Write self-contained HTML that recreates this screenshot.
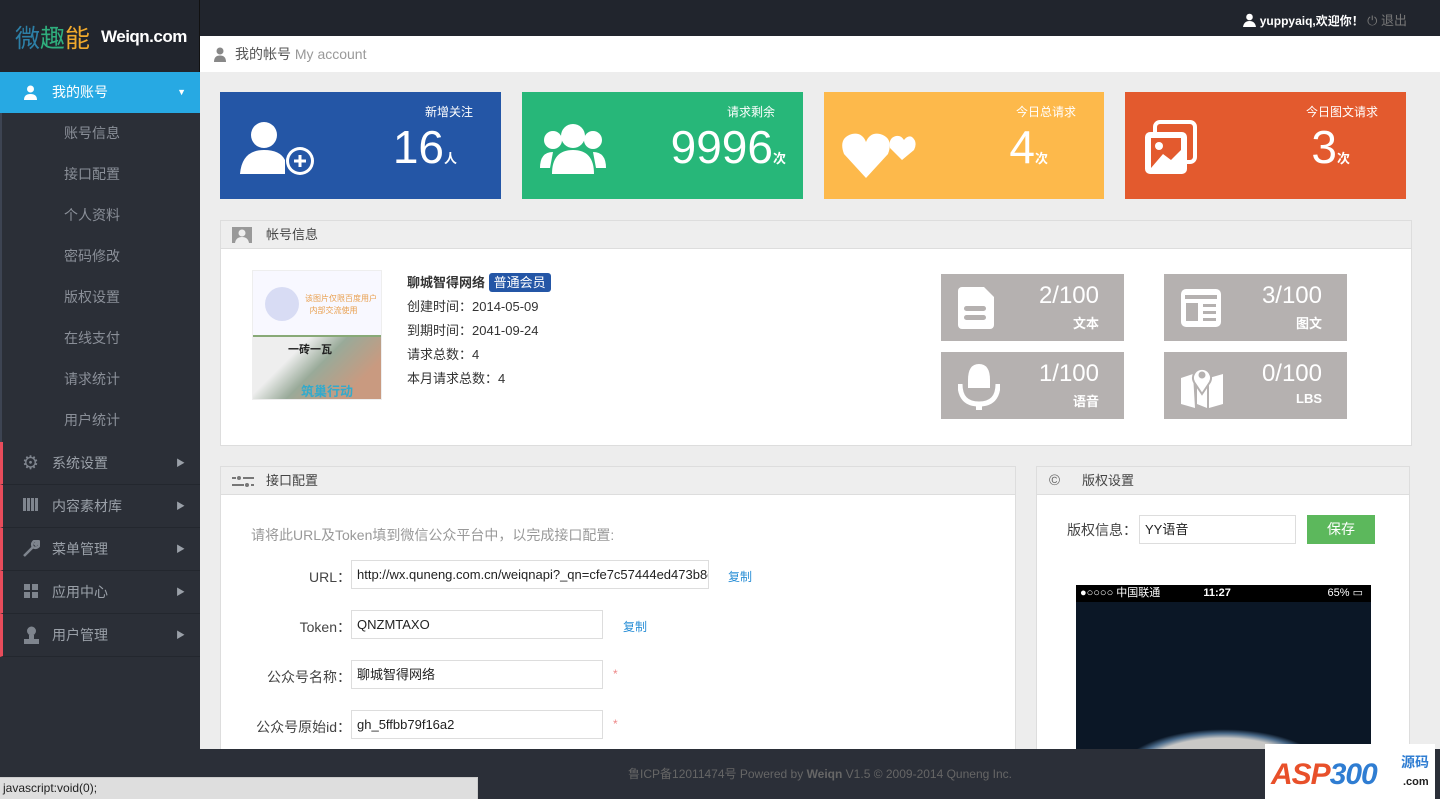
<!DOCTYPE html><html><head><meta charset="utf-8"><style>
*{margin:0;padding:0;box-sizing:border-box}
body{width:1440px;height:799px;overflow:hidden;background:#ededed;font-family:"Liberation Sans","Noto Sans CJK SC",sans-serif;position:relative;font-size:13px;color:#333}
.abs{position:absolute}
#top{left:0;top:0;width:1440px;height:36px;background:#21252d}
#side{left:0;top:0;width:200px;height:799px;background:#2b2f37}
#logo{left:0;top:0;width:200px;height:72px;background:#21252d;border-right:1px solid #111}
.sub{position:absolute;left:0;width:200px;height:41px;line-height:41px;padding-left:62px;color:#8a8f98;font-size:14px;border-left:2px solid #3d4452;background:#2b2f37}
.mi{position:absolute;left:0;width:200px;height:43px;line-height:43px;padding-left:49px;color:#9aa0a8;font-size:14px;border-left:3px solid #e84c5b;border-bottom:1px solid #23272e;background:#2b2f37}
.mi .ar{position:absolute;right:15px;top:0;font-size:9px}
.card{position:absolute;top:92px;height:107px;color:#fff}
.card .t{position:absolute;right:28px;top:11px;font-size:12px}
.card .n{position:absolute;top:28px;font-size:46px;font-weight:300}
.card .n small{font-size:13px;font-weight:bold}
.panel{position:absolute;background:#fff;border:1px solid #ddd}
.ph{height:28px;background:#eee;border-bottom:1px solid #ddd;line-height:28px;padding-left:45px;font-size:13px;color:#444;position:relative}
.gb{position:absolute;width:183px;height:67px;background:#b5b1b0;color:#fff}
.gb .v{position:absolute;right:25px;top:8px;font-size:24px}
.gb .l{position:absolute;right:25px;top:39px;font-size:13px;font-weight:bold}
.inp{position:absolute;height:29px;border:1px solid #ddd;background:#fff;font-size:13px;line-height:27px;padding-left:5px;color:#222;overflow:hidden;white-space:nowrap}
.lab{position:absolute;font-size:14px;color:#444;text-align:right;width:120px}
.cp{position:absolute;color:#2a8fd6;font-size:12px}
.st{position:absolute;color:#e88;font-size:12px}
</style></head><body>
<div id="top" class="abs"></div>
<div class="abs" style="right:33px;top:10px;color:#fff;font-size:12px;font-weight:bold">
<svg width="13" height="14" viewBox="0 0 13 14" style="vertical-align:-2px"><circle cx="6.5" cy="4" r="3.3" fill="#fff"/><path d="M0 14 Q1 8 6.5 8 Q12 8 13 14Z" fill="#fff"/></svg> yuppyaiq,欢迎你！ <span style="color:#777;font-weight:normal;font-size:13px">⏻ 退出</span></div>
<div id="side" class="abs"></div>
<div id="logo" class="abs"><span style="position:absolute;left:15px;top:19px;font-size:25px"><span style="color:#2d7fa6">微</span><span style="color:#2fae7d">趣</span><span style="color:#f0a92c">能</span></span><span style="position:absolute;left:101px;top:27px;color:#fff;font-weight:bold;font-size:17px;letter-spacing:-0.5px">Weiqn.com</span></div>
<div class="abs" style="left:0;top:72px;width:200px;height:41px;background:#27a9e3;color:#fff;font-size:14px;line-height:41px;padding-left:52px">
<svg class="abs" style="left:24px;top:13px" width="13" height="15" viewBox="0 0 13 15"><circle cx="6.5" cy="4" r="3.5" fill="#fff"/><path d="M0 15 Q0 9 6.5 9 Q13 9 13 15Z" fill="#fff"/></svg>我的账号<span style="position:absolute;right:14px;font-size:9px">▼</span></div>
<div class="sub" style="top:113px">账号信息</div><div class="sub" style="top:154px">接口配置</div><div class="sub" style="top:195px">个人资料</div><div class="sub" style="top:236px">密码修改</div><div class="sub" style="top:277px">版权设置</div><div class="sub" style="top:318px">在线支付</div><div class="sub" style="top:359px">请求统计</div><div class="sub" style="top:400px;height:43px;border-bottom:1px solid #23272e">用户统计</div>
<div class="mi" style="top:442px"><span class="abs" style="left:19px;font-size:19px;color:#7f858e">⚙</span>系统设置<span class="ar">▶</span></div>
<div class="mi" style="top:485px"><span class="abs" style="left:20px;top:13px;width:16px;height:13px;background:repeating-linear-gradient(90deg,#7f858e 0 3px,transparent 3px 4px)"></span>内容素材库<span class="ar">▶</span></div>
<div class="mi" style="top:528px"><svg class="abs" style="left:20px;top:12px" width="17" height="17" viewBox="0 0 17 17"><path d="M1 16 L10 7 A4 4 0 0 1 15 1 L12 4 L13 5 L16 2 A4 4 0 0 1 10 7" stroke="#7f858e" stroke-width="2.5" fill="none"/></svg>菜单管理<span class="ar">▶</span></div>
<div class="mi" style="top:571px"><span class="abs" style="left:21px;top:13px;width:6px;height:6px;background:#7f858e;box-shadow:8px 0 #7f858e,0 8px #7f858e,8px 8px #7f858e"></span>应用中心<span class="ar">▶</span></div>
<div class="mi" style="top:614px"><svg class="abs" style="left:21px;top:12px" width="15" height="18" viewBox="0 0 15 18"><circle cx="7.5" cy="5" r="4.5" fill="#7f858e"/><path d="M5 9h5v4h5v5H0v-5h5z" fill="#7f858e"/></svg>用户管理<span class="ar">▶</span></div>

<div class="abs" style="left:200px;top:36px;width:1240px;height:36px;background:#fff;line-height:36px;padding-left:35px;font-size:14px;color:#555">
<svg class="abs" style="left:14px;top:11px" width="12" height="15" viewBox="0 0 12 15"><circle cx="6" cy="4" r="3.5" fill="#888"/><path d="M0 15 Q0 8.5 6 8.5 Q12 8.5 12 15Z" fill="#888"/></svg>我的帐号 <span style="color:#999">My account</span></div>

<div class="card" style="left:220px;width:281px;background:#2456a6"><svg class="abs" style="left:20px;top:28px" width="76" height="56" viewBox="0 0 76 56"><circle cx="24" cy="15" r="13" fill="#fff"/><path d="M0 54 Q2 30 24 30 Q40 30 45 40 L45 54Z" fill="#fff"/><circle cx="60" cy="41" r="14" fill="#fff"/><circle cx="60" cy="41" r="11" fill="#2456a6"/><path d="M54 41h12M60 35v12" stroke="#fff" stroke-width="3"/></svg><div class="t">新增关注</div><div class="n" style="right:44px">16<small>人</small></div></div>
<div class="card" style="left:522px;width:281px;background:#27b779"><svg class="abs" style="left:18px;top:30px" width="66" height="52" viewBox="0 0 66 52"><circle cx="33" cy="14" r="12" fill="#fff"/><path d="M12 52 Q12 28 33 28 Q54 28 54 52Z" fill="#fff"/><circle cx="13" cy="18" r="9" fill="#fff"/><circle cx="53" cy="18" r="9" fill="#fff"/><path d="M0 46 Q0 30 13 30 L10 46Z M66 46 Q66 30 53 30 L56 46Z" fill="#fff"/></svg><div class="t">请求剩余</div><div class="n" style="right:17px">9996<small>次</small></div></div>
<div class="card" style="left:824px;width:280px;background:#fdb94b"><svg class="abs" style="left:18px;top:38px" width="74" height="48" viewBox="0 0 74 48"><path d="M24 48 L2 24 Q-4 8 10 4 Q20 2 24 12 Q28 2 38 4 Q52 8 46 24Z" fill="#fff"/><path d="M60 30 L48 18 Q46 8 54 6 Q59 5 62 10 Q66 5 70 7 Q76 12 72 20Z" fill="#fff"/></svg><div class="t">今日总请求</div><div class="n" style="right:56px">4<small>次</small></div></div>
<div class="card" style="left:1125px;width:281px;background:#e35a2e"><svg class="abs" style="left:18px;top:28px" width="56" height="56" viewBox="0 0 56 56"><rect x="12" y="2" width="40" height="40" rx="5" fill="none" stroke="#fff" stroke-width="4"/><rect x="2" y="12" width="42" height="42" rx="5" fill="#fff"/><rect x="8" y="18" width="30" height="30" fill="#e35a2e"/><circle cx="16" cy="26" r="4" fill="#fff"/><path d="M8 48 L20 34 L28 40 L38 30 L38 48Z" fill="#fff"/></svg><div class="t">今日图文请求</div><div class="n" style="right:56px">3<small>次</small></div></div>

<div class="panel" style="left:220px;top:220px;width:1192px;height:226px"><div class="ph"><svg class="abs" style="left:11px;top:6px" width="20" height="16" viewBox="0 0 20 16"><rect width="20" height="16" fill="#999"/><circle cx="10" cy="6" r="3.5" fill="#eee"/><path d="M3 16 Q4 10 10 10 Q16 10 17 16Z" fill="#eee"/></svg>帐号信息</div>
<div class="abs" style="left:31px;top:49px;width:130px;height:130px;background:linear-gradient(#f8f8ff 0 50%,#8a7 50%,#777 100%);border:1px solid #eee"><div class="abs" style="left:12px;top:16px;width:34px;height:34px;border-radius:50%;background:#d8dcf4"></div><div class="abs" style="left:52px;top:22px;font-size:8px;color:#e9a050;line-height:12px">该图片仅限百度用户<br>&nbsp;&nbsp;内部交流使用</div><div class="abs" style="left:0;top:66px;width:128px;height:62px;background:linear-gradient(135deg,#eee 0 30%,#9a9 50%,#c99a80 80%)"></div><div class="abs" style="left:35px;top:70px;font-size:11px;font-weight:bold;color:#222">一砖一瓦</div><div class="abs" style="left:48px;top:110px;font-size:13px;font-weight:bold;color:#3ac">筑巢行动</div></div>
<div class="abs" style="left:186px;top:50px;font-size:13px;line-height:24px;color:#333"><b>聊城智得网络</b> <span style="background:#2456a6;color:#fff;padding:2px 5px;border-radius:3px;font-size:13px">普通会员</span><br>创建时间：2014-05-09<br>到期时间：2041-09-24<br>请求总数：4<br>本月请求总数：4</div>
<div class="gb" style="left:720px;top:53px"><svg class="abs" style="left:17px;top:13px" width="36" height="42" viewBox="0 0 36 42"><path d="M4 0h22l10 10v28a4 4 0 0 1-4 4H4a4 4 0 0 1-4-4V4a4 4 0 0 1 4-4Z" fill="#fff"/><rect x="6" y="19" width="22" height="5" rx="2.5" fill="#b5b1b0"/><rect x="6" y="28" width="22" height="5" rx="2.5" fill="#b5b1b0"/></svg><div class="v">2/100</div><div class="l">文本</div></div>
<div class="gb" style="left:943px;top:53px"><svg class="abs" style="left:17px;top:15px" width="40" height="38" viewBox="0 0 40 38"><rect width="40" height="38" rx="5" fill="#fff"/><rect x="4" y="6" width="32" height="4" fill="#b5b1b0"/><rect x="5" y="14" width="12" height="18" fill="#b5b1b0"/><rect x="22" y="15" width="13" height="3" fill="#b5b1b0"/><rect x="22" y="22" width="13" height="3" fill="#b5b1b0"/><rect x="22" y="29" width="13" height="3" fill="#b5b1b0"/></svg><div class="v">3/100</div><div class="l">图文</div></div>
<div class="gb" style="left:720px;top:131px"><svg class="abs" style="left:17px;top:12px" width="42" height="46" viewBox="0 0 42 46"><path d="M10 16 Q10 0 21 0 Q32 0 32 16 V24 H10Z" fill="#fff"/><path d="M2 20 Q2 40 21 40 Q40 40 40 20" fill="none" stroke="#fff" stroke-width="5"/><rect x="18" y="38" width="6" height="8" fill="#fff"/></svg><div class="v">1/100</div><div class="l">语音</div></div>
<div class="gb" style="left:943px;top:131px"><svg class="abs" style="left:17px;top:12px" width="42" height="44" viewBox="0 0 42 44"><path d="M0 14 L12 10 L14 44 L0 40Z M28 14 L42 10 L42 40 L28 44Z M16 16 L26 16 L26 44 L16 40Z" fill="#fff"/><path d="M21 30 L13 18 A9 9 0 1 1 29 18Z" fill="#fff" stroke="#b5b1b0" stroke-width="2"/><circle cx="21" cy="11" r="3.5" fill="#b5b1b0"/></svg><div class="v">0/100</div><div class="l">LBS</div></div>
</div>

<div class="panel" style="left:220px;top:466px;width:796px;height:290px"><div class="ph"><svg class="abs" style="left:11px;top:9px" width="22" height="11" viewBox="0 0 22 11"><rect x="0" y="1" width="4" height="2" fill="#777"/><circle cx="7" cy="2" r="2" fill="#777"/><rect x="11" y="1" width="11" height="2" fill="#777"/><rect x="0" y="8" width="12" height="2" fill="#777"/><circle cx="15" cy="9" r="2" fill="#777"/><rect x="19" y="8" width="3" height="2" fill="#777"/></svg>接口配置</div>
<div class="abs" style="left:30px;top:58px;color:#999;font-size:14px">请将此URL及Token填到微信公众平台中，以完成接口配置:</div>
<div class="lab" style="left:10px;top:100px">URL：</div><div class="inp" style="left:130px;top:93px;width:358px">http://wx.quneng.com.cn/weiqnapi?_qn=cfe7c57444ed473b8c</div><div class="cp" style="left:507px;top:101px">复制</div>
<div class="lab" style="left:10px;top:150px">Token：</div><div class="inp" style="left:130px;top:143px;width:252px">QNZMTAXO</div><div class="cp" style="left:402px;top:151px">复制</div>
<div class="lab" style="left:10px;top:200px">公众号名称：</div><div class="inp" style="left:130px;top:193px;width:252px">聊城智得网络</div><div class="st" style="left:392px;top:200px">*</div>
<div class="lab" style="left:10px;top:250px">公众号原始id：</div><div class="inp" style="left:130px;top:243px;width:252px">gh_5ffbb79f16a2</div><div class="st" style="left:392px;top:250px">*</div>
</div>

<div class="panel" style="left:1036px;top:466px;width:374px;height:290px"><div class="ph"><span class="abs" style="left:12px;top:0;font-size:15px;color:#666">©</span>版权设置</div>
<div class="abs" style="left:30px;top:53px;font-size:14px;color:#444">版权信息：</div><div class="inp" style="left:102px;top:48px;width:157px">YY语音</div>
<div class="abs" style="left:270px;top:48px;width:68px;height:29px;background:#5cb85c;color:#fff;font-size:14px;line-height:29px;text-align:center">保存</div>
<div class="abs" style="left:39px;top:118px;width:295px;height:172px;background:radial-gradient(ellipse 140px 60px at 50% 110%,#c9c8c6 0 60%,#4a6a8a 68%,transparent 75%),#0b1726"><div style="height:17px;background:#000;color:#fff;font-size:11px;line-height:17px;padding-left:4px">●○○○○ 中国联通 <b style="margin-left:40px">11:27</b><span style="float:right;margin-right:8px">65% ▭</span></div></div>
</div>

<div class="abs" style="left:200px;top:749px;width:1240px;height:50px;background:#2b2f38;color:#666;font-size:12px;text-align:center;line-height:50px">鲁ICP备12011474号 Powered by <b>Weiqn</b> V1.5 © 2009-2014 Quneng Inc.</div>
<div class="abs" style="left:1265px;top:744px;width:170px;height:55px;background:#fff"><span class="abs" style="left:6px;top:14px;font-size:30px;font-weight:bold;font-style:italic;color:#e8502a;letter-spacing:-1px">ASP<span style="color:#2f7dd2">300</span></span><span class="abs" style="left:136px;top:8px;font-size:14px;font-weight:bold;color:#2f7dd2">源码</span><span class="abs" style="left:138px;top:32px;font-size:11px;font-weight:bold;color:#222">.com</span></div>
<div class="abs" style="left:0;top:777px;width:478px;height:22px;background:#dedede;border-top:1px solid #ccc;border-right:1px solid #ccc;font-size:12px;line-height:21px;padding-left:3px;color:#222">javascript:void(0);</div>
</body></html>
